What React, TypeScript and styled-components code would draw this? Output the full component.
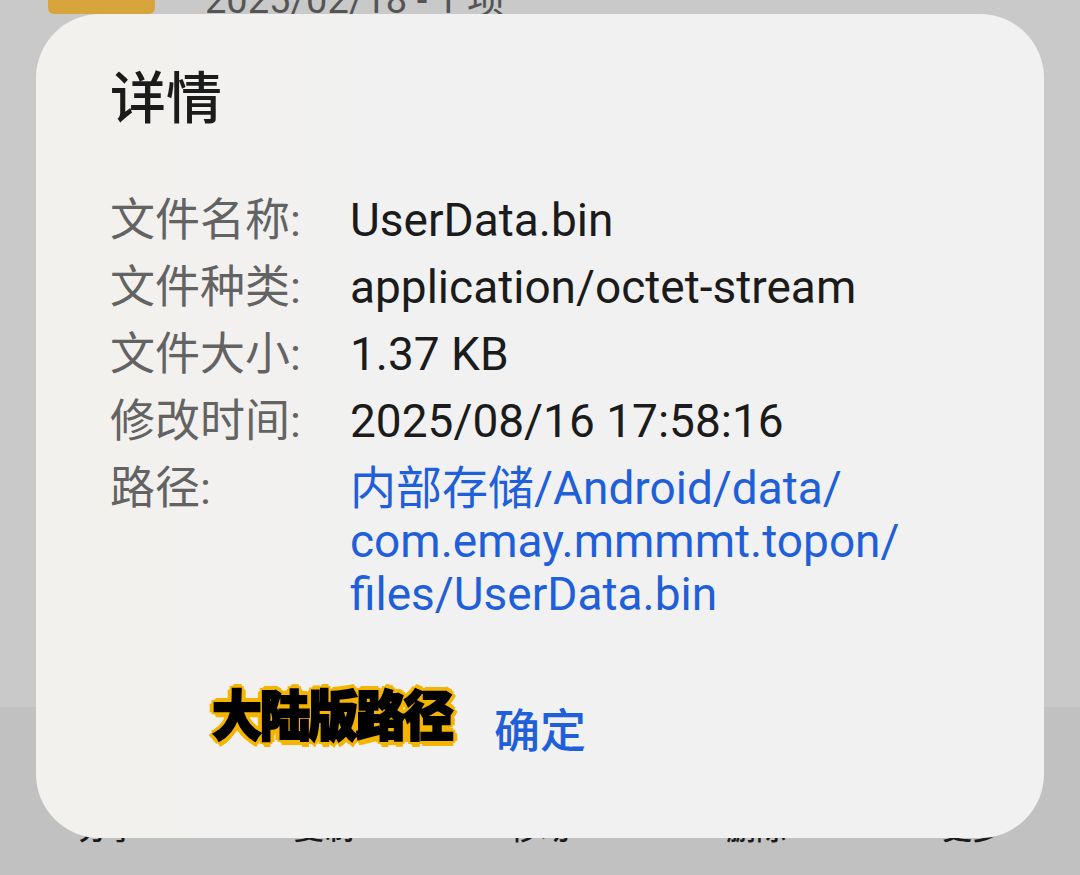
import React from 'react';
import styled, { createGlobalStyle } from 'styled-components';

const GlobalStyle = createGlobalStyle`
  html, body {
    margin: 0;
    padding: 0;
    background: #c9c9c9;
  }
  body {
    font-family: Roboto, "Noto Sans CJK SC", sans-serif;
    -webkit-font-smoothing: antialiased;
  }
`;

const Screen = styled.div`
  position: relative;
  width: 1080px;
  height: 875px;
  overflow: hidden;
  display: flex;
  flex-direction: column;
  background: #c9c9c9;
`;

const ListItem = styled.div`
  display: flex;
  align-items: flex-end;
  gap: 50px;
  height: 14px;
  padding-left: 48px;
`;

const FolderIcon = styled.div`
  width: 107px;
  height: 14px;
  background: #d8a53c;
  border-radius: 0 0 6px 6px;
`;

const ItemMeta = styled.div`
  font-size: 38px;
  line-height: 38px;
  color: #555;
  margin-bottom: -5px;
  white-space: nowrap;
`;

const Spacer = styled.div`
  flex: 1;
`;

const Toolbar = styled.div`
  height: 168px;
  background: #c1c1c1;
  display: grid;
  grid-template-columns: repeat(5, 1fr);
`;

const ToolItem = styled.div`
  display: flex;
  flex-direction: column;
  align-items: center;
  padding-top: 104px;
  font-size: 30px;
  line-height: 36px;
  font-weight: 500;
  color: #1a1a1a;
`;

const Dialog = styled.div`
  position: absolute;
  left: 36px;
  top: 14px;
  width: 1008px;
  height: 824px;
  box-sizing: border-box;
  border-radius: 64px;
  background: linear-gradient(90deg, #f3f1ed 0%, #f1f1f1 35%, #f1f1f1 100%);
  padding: 52px 74px 0;
  display: flex;
  flex-direction: column;
`;

const Title = styled.h1`
  margin: 0;
  font-size: 56px;
  line-height: 67px;
  font-weight: 500;
  color: #1b1b1b;
`;

const InfoGrid = styled.dl`
  margin: 61px 0 0;
  display: grid;
  grid-template-columns: 240px 1fr;
  row-gap: 14px;
`;

const Label = styled.dt`
  font-size: 45px;
  line-height: 53px;
  color: #636363;
  white-space: nowrap;
`;

const Value = styled.dd<{ $link?: boolean }>`
  margin: 0;
  font-size: 46px;
  line-height: 53px;
  color: ${({ $link }) => ($link ? '#1f5fd9' : '#1b1b1b')};
  white-space: nowrap;
`;

const PathLine = styled.div`
  display: block;
`;

const Footer = styled.div`
  margin-top: 82px;
  display: flex;
  justify-content: center;
`;

const ConfirmButton = styled.button`
  border: none;
  background: none;
  padding: 0;
  font-family: inherit;
  font-size: 46px;
  line-height: 56px;
  font-weight: 500;
  color: #1f5fd9;
`;

const Sticker = styled.div`
  position: absolute;
  left: 212px;
  top: 680px;
  font-family: "Noto Sans CJK SC", sans-serif;
  font-size: 50px;
  line-height: 60px;
  font-weight: 900;
  letter-spacing: -2px;
  color: #000;
  transform: scaleY(1.08);
  transform-origin: left top;
  -webkit-text-stroke: 2px #000;
  text-shadow:
    4px 0 0 #f4b400, -4px 0 0 #f4b400, 0 4px 0 #f4b400, 0 -4px 0 #f4b400,
    3px 3px 0 #f4b400, -3px 3px 0 #f4b400, 3px -3px 0 #f4b400, -3px -3px 0 #f4b400,
    5px 1px 0 #f4b400, -5px 1px 0 #f4b400, 1px 5px 0 #f4b400, 1px -5px 0 #f4b400;
`;

const rows = [
  { label: '文件名称:', value: 'UserData.bin' },
  { label: '文件种类:', value: 'application/octet-stream' },
  { label: '文件大小:', value: '1.37 KB' },
  { label: '修改时间:', value: '2025/08/16 17:58:16' },
];

const pathLines = ['内部存储/Android/data/', 'com.emay.mmmmt.topon/', 'files/UserData.bin'];

const tools = ['分享', '复制', '移动', '删除', '更多'];

export default function App() {
  return (
    <>
      <GlobalStyle />
      <Screen>
        <ListItem>
          <FolderIcon />
          <ItemMeta>2025/02/18 - 1 项</ItemMeta>
        </ListItem>
        <Spacer />
        <Toolbar>
          {tools.map((t) => (
            <ToolItem key={t}>{t}</ToolItem>
          ))}
        </Toolbar>

        <Dialog>
          <Title>详情</Title>
          <InfoGrid>
            {rows.map((r) => (
              <React.Fragment key={r.label}>
                <Label>{r.label}</Label>
                <Value>{r.value}</Value>
              </React.Fragment>
            ))}
            <Label>路径:</Label>
            <Value $link>
              {pathLines.map((p) => (
                <PathLine key={p}>{p}</PathLine>
              ))}
            </Value>
          </InfoGrid>
          <Footer>
            <ConfirmButton>确定</ConfirmButton>
          </Footer>
        </Dialog>

        <Sticker>大陆版路径</Sticker>
      </Screen>
    </>
  );
}
